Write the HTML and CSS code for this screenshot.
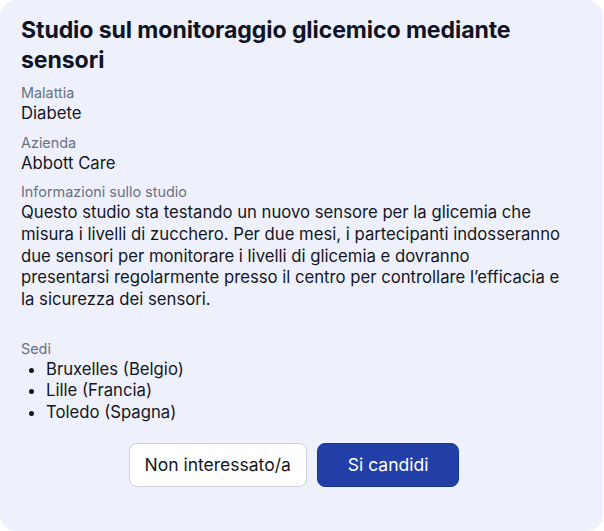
FILE: index.html
```html
<!DOCTYPE html>
<html lang="it">
<head>
<meta charset="utf-8">
<title>Studio</title>
<link rel="stylesheet" href="styles.css">
</head>
<body>
<div class="card">
  <h1 class="title">Studio sul monitoraggio glicemico mediante sensori</h1>
  <div class="field">
    <div class="label">Malattia</div>
    <div class="value">Diabete</div>
  </div>
  <div class="field">
    <div class="label">Azienda</div>
    <div class="value">Abbott Care</div>
  </div>
  <div class="field">
    <div class="label">Informazioni sullo studio</div>
    <p class="value desc">Questo studio sta testando un nuovo sensore per la glicemia che<br>misura i livelli di zucchero. Per due mesi, i partecipanti indosseranno<br>due sensori per monitorare i livelli di glicemia e dovranno<br>presentarsi regolarmente presso il centro per controllare l’efficacia e<br>la sicurezza dei sensori.</p>
  </div>
  <div class="field">
    <div class="label">Sedi</div>
    <ul class="value sites">
      <li>Bruxelles (Belgio)</li>
      <li>Lille (Francia)</li>
      <li>Toledo (Spagna)</li>
    </ul>
  </div>
  <div class="actions">
    <button class="btn btn-secondary">Non interessato/a</button>
    <button class="btn btn-primary">Si candidi</button>
  </div>
</div>
</body>
</html>
```
FILE: styles.css
```css
html, body {
  margin: 0;
  padding: 0;
  background: #ffffff;
}
body {
  font-family: Inter, "Liberation Sans", sans-serif;
  color: #111827;
}
.card {
  box-sizing: border-box;
  width: 603px;
  height: 531px;
  background: #eef1fc;
  border-radius: 16px;
  padding: 15px 36px 0 21px;
  display: flex;
  flex-direction: column;
  gap: 8px;
}
.title {
  margin: 0;
  font-size: 23.1px;
  line-height: 30px;
  font-weight: 700;
  color: #0f1424;
  letter-spacing: -0.1px;
}
.field {
  display: flex;
  flex-direction: column;
}
.label {
  font-size: 14.4px;
  line-height: 20px;
  color: #6b7080;
}
.value {
  font-size: 16.7px;
  line-height: 21.65px;
  color: #14161f;
}
.desc {
  margin: 0 0 20px;
}
.sites {
  margin: 0;
  padding-left: 25px;
}
.actions {
  display: flex;
  justify-content: center;
  gap: 10px;
  margin-top: 11px;
}
.btn {
  font-family: Inter, "Liberation Sans", sans-serif;
  font-size: 17.5px;
  height: 44px;
  border-radius: 8px;
  cursor: pointer;
}
.btn-secondary {
  background: #ffffff;
  border: 1px solid #cdd2dc;
  color: #14161f;
  padding: 0 15px;
}
.btn-primary {
  background: #213fa6;
  border: 1px solid #1c368f;
  color: #ffffff;
  padding: 0 30px;
}
```
